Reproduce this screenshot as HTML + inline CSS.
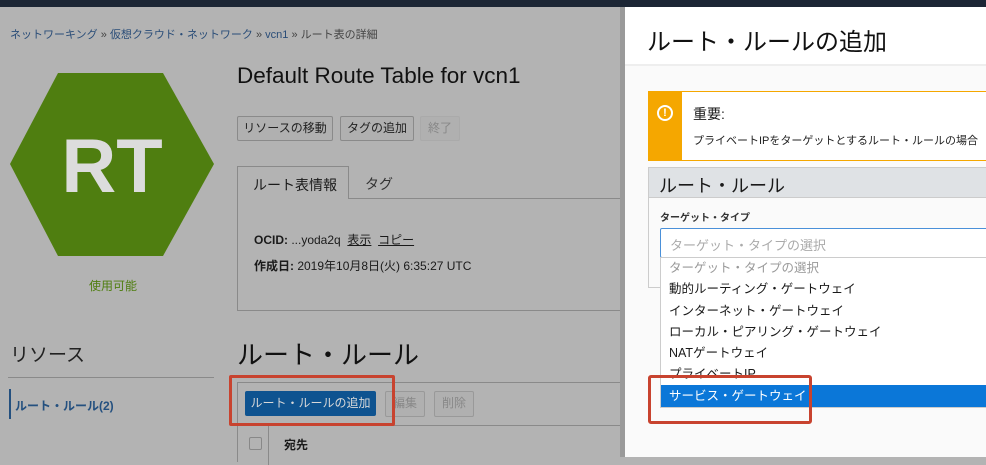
<!DOCTYPE html>
<html><head><meta charset="utf-8"><style>
*{margin:0;padding:0;box-sizing:border-box}
body{width:986px;height:457px;overflow:hidden;position:relative;background:#b3b3b3;font-family:"Liberation Sans","Noto Sans CJK JP",sans-serif;color:#1a1a1a}
.a{position:absolute;white-space:nowrap}
.btn{position:absolute;border:1px solid #8a8a8a;border-radius:2px;background:#b0b0b0;font-size:12px;text-align:center;line-height:22px;color:#222}
</style></head><body>
<div class="a" style="left:0;top:0;width:986px;height:7px;background:#1c2635"></div>
<div class="a" style="left:10px;top:26px;font-size:11px;color:#2a4d78">ネットワーキング <span style="color:#444">»</span> 仮想クラウド・ネットワーク <span style="color:#444">»</span> vcn1 <span style="color:#444">» ルート表の詳細</span></div>
<svg class="a" style="left:0;top:0" width="230" height="270"><polygon points="10,164 58,73 163,73 214,164 163,256 58,256" fill="#4f7e10"/><text x="112" y="192" text-anchor="middle" font-family="Liberation Sans" font-weight="bold" font-size="76" fill="#dcdcdc">RT</text></svg>
<div class="a" style="left:89px;top:277px;font-size:12px;color:#4f7e10">使用可能</div>
<div class="a" style="left:237px;top:63px;font-size:22.5px;color:#111">Default Route Table for vcn1</div>
<div class="btn" style="left:237px;top:116px;width:96px;height:25px">リソースの移動</div>
<div class="btn" style="left:340px;top:116px;width:74px;height:25px">タグの追加</div>
<div class="btn" style="left:420px;top:116px;width:40px;height:25px;border-color:#aaa;color:#888">終了</div>
<div class="a" style="left:237px;top:198px;width:390px;height:113px;border:1px solid #8a8a8a"></div>
<div class="a" style="left:237px;top:166px;width:112px;height:33px;border:1px solid #8a8a8a;border-bottom:none;background:#b3b3b3;font-size:14px;padding:8px 0 0 15px">ルート表情報</div>
<div class="a" style="left:365px;top:174px;font-size:14px;color:#333">タグ</div>
<div class="a" style="left:254px;top:231px;font-size:12px"><b>OCID:</b> ...yoda2q &nbsp;<u>表示</u> &nbsp;<u>コピー</u></div>
<div class="a" style="left:254px;top:257px;font-size:12px"><b>作成日:</b> 2019年10月8日(火) 6:35:27 UTC</div>
<div class="a" style="left:10px;top:340px;font-size:19px;color:#222">リソース</div>
<div class="a" style="left:8px;top:377px;width:206px;height:1px;background:#8a8a8a"></div>
<div class="a" style="left:9px;top:389px;width:2px;height:30px;background:#24507f"></div>
<div class="a" style="left:15px;top:397px;font-size:12px;font-weight:bold;color:#24507f">ルート・ルール(2)</div>
<div class="a" style="left:237px;top:335px;font-size:26px;color:#111">ルート・ルール</div>
<div class="a" style="left:237px;top:382px;width:390px;height:1px;background:#8a8a8a"></div>
<div class="a" style="left:237px;top:425px;width:390px;height:1px;background:#8a8a8a"></div>
<div class="a" style="left:237px;top:382px;width:1px;height:80px;background:#8a8a8a"></div>
<div class="a" style="left:268px;top:425px;width:1px;height:40px;background:#8a8a8a"></div>
<div class="a" style="left:245px;top:391px;width:131px;height:25px;background:#0e5390;border-radius:2px;color:#d8d8d8;font-size:12px;text-align:center;line-height:25px">ルート・ルールの追加</div>
<div class="btn" style="left:385px;top:391px;width:40px;height:26px;border-color:#999;color:#888">編集</div>
<div class="btn" style="left:434px;top:391px;width:40px;height:26px;border-color:#999;color:#888">削除</div>
<div class="a" style="left:249px;top:437px;width:13px;height:13px;border:1px solid #888;border-radius:2px"></div>
<div class="a" style="left:284px;top:436px;font-size:12px;font-weight:bold">宛先</div>
<div class="a" style="left:229px;top:375px;width:166px;height:51px;border:3px solid #c8432f;border-radius:2px"></div>
<!-- right panel -->
<div class="a" style="left:620px;top:7px;width:5px;height:450px;background:#9a9a9a"></div>
<div class="a" style="left:625px;top:7px;width:361px;height:450px;background:#fafafa"></div>
<div class="a" style="left:625px;top:7px;width:361px;height:59px;background:#fff;border-bottom:2px solid #eee"></div>
<div class="a" style="left:647px;top:22px;font-size:24px;color:#111">ルート・ルールの追加</div>
<div class="a" style="left:648px;top:91px;width:340px;height:70px;border:1px solid #f5a700;background:#fff"></div>
<div class="a" style="left:648px;top:91px;width:34px;height:70px;background:#f5a700;border-radius:3px 0 0 3px"></div>
<div class="a" style="left:657px;top:105px;width:16px;height:16px;border:2px solid #fff;border-radius:50%;color:#fff;font-size:11px;font-weight:bold;text-align:center;line-height:12px">!</div>
<div class="a" style="left:693px;top:104px;font-size:14px">重要:</div>
<div class="a" style="left:693px;top:132px;font-size:11px;color:#222">プライベートIPをターゲットとするルート・ルールの場合</div>
<div class="a" style="left:648px;top:167px;width:340px;height:121px;border:1px solid #ccc;background:#fafafa"></div>
<div class="a" style="left:649px;top:168px;width:337px;height:30px;background:#dfe2e5;border-bottom:1px solid #ccc"></div>
<div class="a" style="left:659px;top:172px;font-size:18px">ルート・ルール</div>
<div class="a" style="left:660px;top:209px;font-size:10px;font-weight:bold;color:#333">ターゲット・タイプ</div>
<div class="a" style="left:660px;top:228px;width:330px;height:30px;border:1px solid #4a90d9;border-radius:2px;background:#fff;font-size:13px;color:#aaa;padding:6px 0 0 9px">ターゲット・タイプの選択</div>
<div class="a" style="left:660px;top:257px;width:330px;height:151px;background:#fff;border:1px solid #ccc;font-size:12.5px;line-height:21.3px;padding:0 0 0 8px">
<div style="color:#999">ターゲット・タイプの選択</div>
<div>動的ルーティング・ゲートウェイ</div>
<div>インターネット・ゲートウェイ</div>
<div>ローカル・ピアリング・ゲートウェイ</div>
<div>NATゲートウェイ</div>
<div>プライベートIP</div>
</div>
<div class="a" style="left:661px;top:385px;width:329px;height:22px;background:#0b77d8;color:#fff;font-size:12.5px;line-height:22px;padding-left:8px">サービス・ゲートウェイ</div>
<div class="a" style="left:648px;top:375px;width:164px;height:49px;border:3px solid #c8432f;border-radius:3px"></div>
</body></html>
